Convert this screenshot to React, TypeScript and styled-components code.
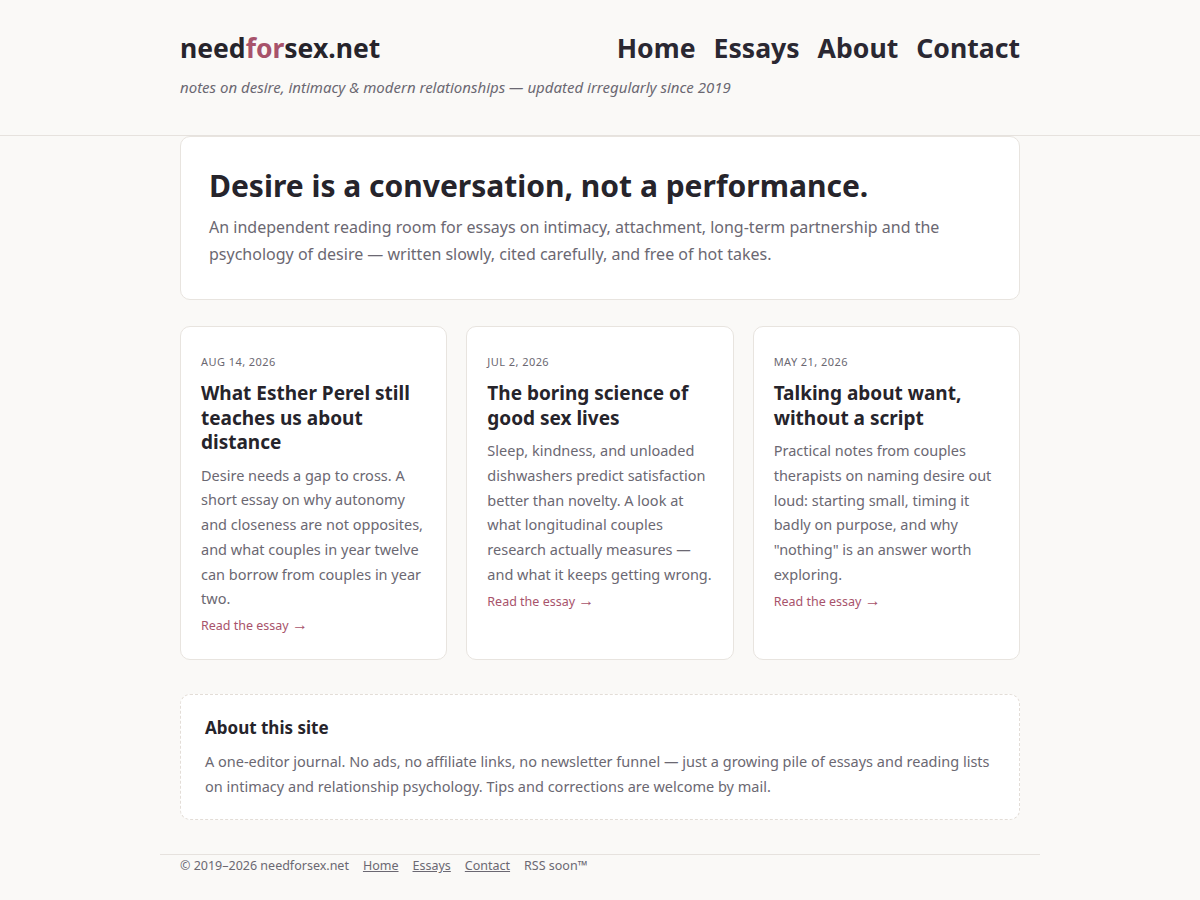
import styled, { createGlobalStyle } from "styled-components";

const GlobalStyle = createGlobalStyle`
	* {
		box-sizing: border-box;
	}
	body {
		margin: 0;
		background: #faf9f7;
		color: #26242b;
		font-family: "Noto Sans", "Open Sans", sans-serif;
	}
`;

const essays = [
	{
		date: "Aug 14, 2026",
		title: "What Esther Perel still teaches us about distance",
		body: "Desire needs a gap to cross. A short essay on why autonomy and closeness are not opposites, and what couples in year twelve can borrow from couples in year two.",
	},
	{
		date: "Jul 2, 2026",
		title: "The boring science of good sex lives",
		body: "Sleep, kindness, and unloaded dishwashers predict satisfaction better than novelty. A look at what longitudinal couples research actually measures — and what it keeps getting wrong.",
	},
	{
		date: "May 21, 2026",
		title: "Talking about want, without a script",
		body: 'Practical notes from couples therapists on naming desire out loud: starting small, timing it badly on purpose, and why "nothing" is an answer worth exploring.',
	},
];

export default function App() {
	return (
		<>
			<GlobalStyle />
			<Header>
				<HeaderInner>
					<TopRow>
						<Logo>
							need<Accent>for</Accent>sex.net
						</Logo>
						<Nav>
							<NavLink>Home</NavLink>
							<NavLink>Essays</NavLink>
							<NavLink>About</NavLink>
							<NavLink>Contact</NavLink>
						</Nav>
					</TopRow>
					<Tagline>
						notes on desire, intimacy &amp; modern relationships — updated
						irregularly since 2019
					</Tagline>
				</HeaderInner>
			</Header>
			<Main>
				<Hero>
					<HeroTitle>Desire is a conversation, not a performance.</HeroTitle>
					<HeroText>
						An independent reading room for essays on intimacy, attachment,
						long-term partnership and the psychology of desire — written
						slowly, cited carefully, and free of hot takes.
					</HeroText>
				</Hero>
				<Grid>
					{essays.map((e) => (
						<Card key={e.title}>
							<DateLine>{e.date}</DateLine>
							<CardTitle>{e.title}</CardTitle>
							<CardText>{e.body}</CardText>
							<ReadLink>
								Read the essay <Arrow>→</Arrow>
							</ReadLink>
						</Card>
					))}
				</Grid>
				<About>
					<AboutTitle>About this site</AboutTitle>
					<AboutText>
						A one-editor journal. No ads, no affiliate links, no newsletter
						funnel — just a growing pile of essays and reading lists on
						intimacy and relationship psychology. Tips and corrections are
						welcome by mail.
					</AboutText>
				</About>
			</Main>
			<Footer>
				<span>© 2019–2026 needforsex.net</span>
				<FooterLink>Home</FooterLink>
				<FooterLink>Essays</FooterLink>
				<FooterLink>Contact</FooterLink>
				<span>RSS soon™</span>
			</Footer>
		</>
	);
}

const Header = styled.header`
	border-bottom: 1px solid #e6e2de;
`;

const HeaderInner = styled.div`
	width: 840px;
	margin: 0 auto;
	padding: 28px 0 37px;
`;

const TopRow = styled.div`
	display: flex;
	justify-content: space-between;
	align-items: center;
`;

const Logo = styled.div`
	font-size: 26.5px;
	font-weight: 700;
	line-height: 40px;
	color: #26242b;
`;

const Accent = styled.span`
	color: #a8536b;
`;

const Nav = styled.nav`
	display: flex;
	gap: 18px;
`;

const NavLink = styled.a`
	font-size: 26.6px;
	font-weight: 700;
	line-height: 40px;
	color: #2a2832;
	cursor: pointer;
`;

const Tagline = styled.p`
	margin: 8px 0 0;
	font-size: 15px;
	font-style: italic;
	line-height: 22px;
	color: #6b6872;
`;

const Main = styled.main`
	width: 840px;
	margin: 0 auto;
	display: flex;
	flex-direction: column;
`;

const Hero = styled.section`
	background: #fff;
	border: 1px solid #e8e4df;
	border-radius: 10px;
	padding: 29px 28px 31px;
`;

const HeroTitle = styled.h1`
	margin: 0 0 8px;
	font-size: 30px;
	font-weight: 700;
	line-height: 40px;
	color: #26242b;
`;

const HeroText = styled.p`
	margin: 0;
	font-size: 16px;
	line-height: 27px;
	color: #6b6872;
`;

const Grid = styled.div`
	margin-top: 26px;
	display: grid;
	grid-template-columns: repeat(3, 1fr);
	gap: 19px;
`;

const Card = styled.article`
	background: #fff;
	border: 1px solid #e8e4df;
	border-radius: 10px;
	padding: 26px 20px 23px;
`;

const DateLine = styled.div`
	font-size: 11px;
	line-height: 18px;
	text-transform: uppercase;
	letter-spacing: 0.04em;
	color: #6b6872;
`;

const CardTitle = styled.h2`
	margin: 10px 0 8px;
	font-size: 19px;
	font-weight: 700;
	line-height: 24.5px;
	color: #26242b;
`;

const CardText = styled.p`
	margin: 0 0 2px;
	font-size: 14.5px;
	line-height: 24.8px;
	color: #6b6872;
`;

const ReadLink = styled.a`
	font-size: 12.5px;
	line-height: 20px;
	color: #a8536b;
	cursor: pointer;
`;

const Arrow = styled.span`
	font-size: 16px;
	line-height: 0;
`;

const About = styled.section`
	margin-top: 34px;
	background: #fff;
	border: 1px dashed #e3ddd7;
	border-radius: 10px;
	padding: 20px 24px 20px;
`;

const AboutTitle = styled.h3`
	margin: 0 0 9px;
	font-size: 17px;
	font-weight: 700;
	line-height: 25px;
	color: #26242b;
`;

const AboutText = styled.p`
	margin: 0;
	font-size: 14.5px;
	line-height: 25px;
	color: #6b6872;
`;

const Footer = styled.footer`
	width: 880px;
	margin: 34px auto 0;
	padding: 1px 20px 20px;
	border-top: 1px solid #e6e2de;
	display: flex;
	gap: 14px;
	font-size: 12.5px;
	line-height: 20px;
	color: #6b6872;
`;

const FooterLink = styled.a`
	color: #6b6872;
	text-decoration: underline;
	cursor: pointer;
`;
